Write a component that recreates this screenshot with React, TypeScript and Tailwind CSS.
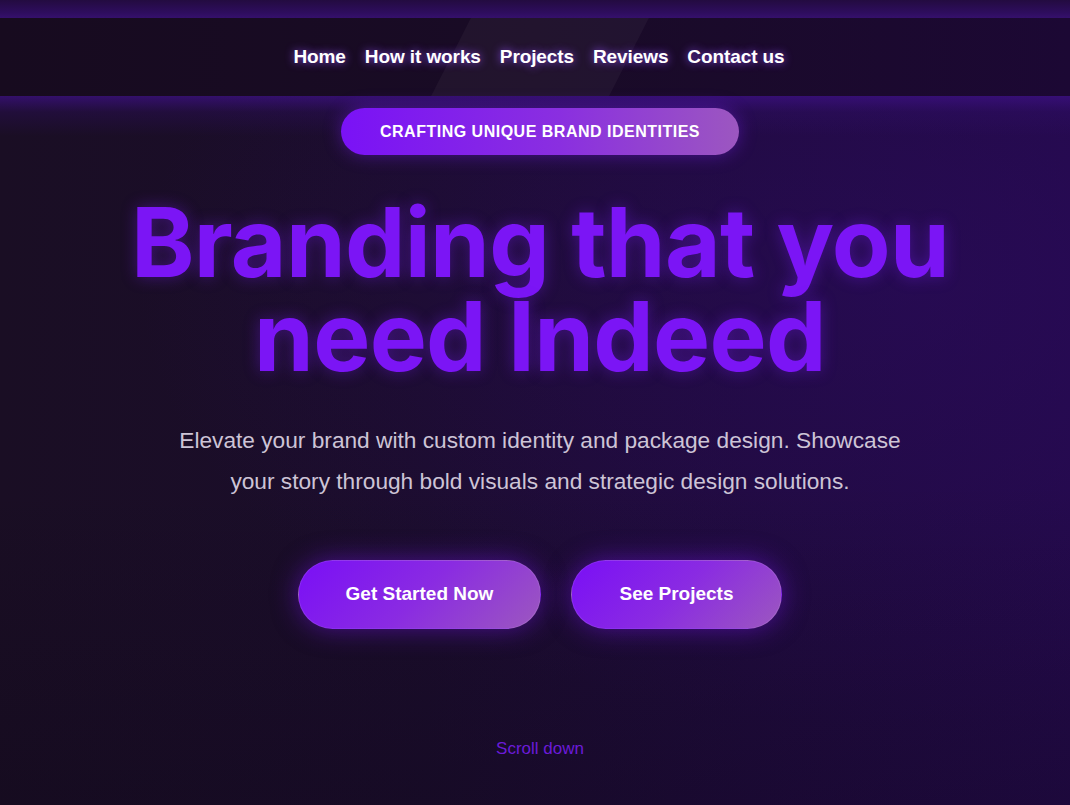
import { useState } from "react"

const links = ["Home", "How it works", "Projects", "Reviews", "Contact us"]

const Header = () => {
  return (
    <header className="relative">
      {/* glow strip above the bar */}
      <div className="h-[18px] bg-[linear-gradient(180deg,#230b40_0%,#2e0d5e_70%,#35106c_100%)]" />
      <div className="relative h-[78px] overflow-hidden bg-[linear-gradient(90deg,#170b1f_0%,#190b26_50%,#1c0834_100%)]">
        {/* light slanted sheen */}
        <div className="absolute top-0 left-[451px] h-full w-[178px] -skew-x-[27deg] bg-white/[0.04]" />
        <nav className="relative flex h-full items-center justify-center gap-[19px] pl-[8px] font-['Liberation_Sans',Arial,sans-serif]">
          {links.map((l) => (
            <a
              key={l}
              href="#"
              className="text-[19px] font-bold tracking-[-0.1px] text-white [text-shadow:0_0_8px_rgba(150,80,255,0.9)]"
            >
              {l}
            </a>
          ))}
        </nav>
      </div>
      <div className="h-[40px] bg-[linear-gradient(180deg,rgba(60,16,130,0.75)_0%,rgba(50,14,110,0.3)_40%,rgba(40,10,90,0)_100%)] absolute left-0 right-0 top-[96px] pointer-events-none" />
    </header>
  )
}

const Hero = () => {
  const [hover, setHover] = useState<string | null>(null)

  return (
    <main className="relative flex flex-col items-center pt-[12px] pl-[10px] font-['Liberation_Sans',Arial,sans-serif]">
      <div className="flex h-[47px] w-[398px] items-center justify-center rounded-full bg-[linear-gradient(90deg,#7a12f6_0%,#8a2fe0_55%,#9c57c0_100%)] shadow-[0_0_18px_rgba(120,30,240,0.45)]">
        <span className="text-[16px] font-bold uppercase tracking-[0.5px] text-white">
          Crafting Unique Brand Identities
        </span>
      </div>

      <h1 className="mt-[40px] text-center font-['Inter',sans-serif] text-[96px] font-bold leading-[94px] tracking-[-0.7px] text-[#7b15f5] [text-shadow:0_0_16px_rgba(120,30,245,0.4)]">
        Branding that you
        <br />
        need Indeed
      </h1>

      <p className="mt-[37px] w-[760px] text-center text-[22.7px] leading-[41px] text-[#cdc4d6]">
        Elevate your brand with custom identity and package design. Showcase your story through bold visuals and strategic design solutions.
      </p>

      <div className="mt-[58px] flex gap-[30px]">
        {[
          { label: "Get Started Now", w: "w-[243px]" },
          { label: "See Projects", w: "w-[211px]" },
        ].map((b) => (
          <button
            key={b.label}
            onMouseEnter={() => setHover(b.label)}
            onMouseLeave={() => setHover(null)}
            className={`${b.w} h-[69px] rounded-full border border-white/10 bg-[linear-gradient(135deg,#7a0ff6_0%,#8a2be2_50%,#9c58bf_100%)] text-[19px] font-bold text-white shadow-[0_0_26px_rgba(120,20,240,0.5)] ${
              hover === b.label ? "brightness-110" : ""
            }`}
          >
            {b.label}
          </button>
        ))}
      </div>

      <span className="mt-[107px] text-[17px] text-[#6b1bd8]">Scroll down</span>
    </main>
  )
}

export default function App() {
  return (
    <div className="relative min-h-[805px] w-full overflow-hidden bg-[linear-gradient(90deg,#1a0e24_0%,#1b0d2c_40%,#1f0b3c_70%,#230a49_100%)]">
      {/* soft purple glow on the right */}
      <div className="pointer-events-none absolute inset-0 bg-[radial-gradient(ellipse_at_85%_35%,rgba(45,10,100,0.45)_0%,rgba(45,10,100,0)_60%)]" />
      <div className="pointer-events-none absolute inset-0 bg-[linear-gradient(180deg,rgba(0,0,0,0)_60%,rgba(10,4,20,0.25)_100%)]" />
      <div className="relative">
        <Header />
        <Hero />
      </div>
    </div>
  )
}
